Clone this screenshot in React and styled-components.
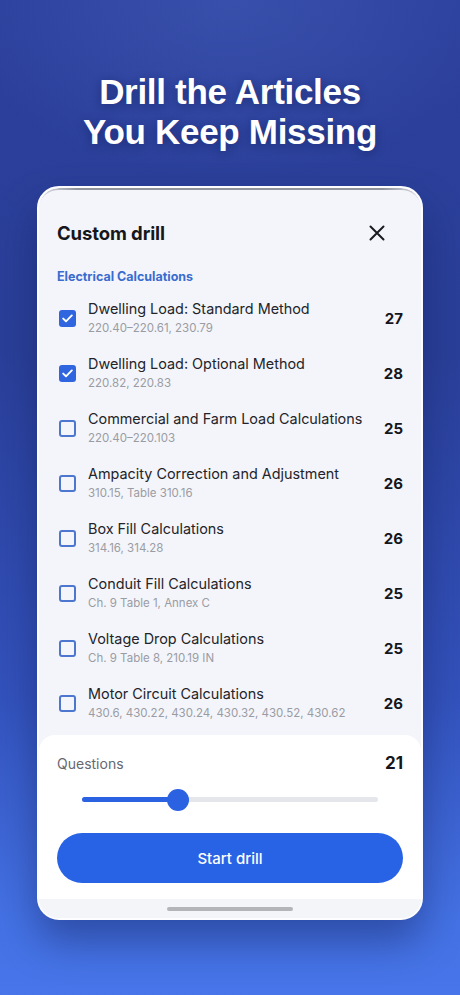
import styled, { createGlobalStyle } from "styled-components";

const GlobalStyle = createGlobalStyle`
  html, body {
    margin: 0;
    padding: 0;
  }
  body {
    font-family: Inter, "Noto Sans", sans-serif;
    -webkit-font-smoothing: antialiased;
  }
`;

const Page = styled.div`
  width: 460px;
  height: 995px;
  overflow: hidden;
  display: flex;
  flex-direction: column;
  align-items: center;
  background:
    radial-gradient(ellipse 60% 18% at 50% 0%, rgba(80, 110, 200, 0.35), rgba(80, 110, 200, 0) 100%),
    linear-gradient(180deg, #2c409c 0%, #2a3f98 35%, #3352bc 70%, #4472e4 92%, #4876ea 100%);
`;

const Headline = styled.h1`
  margin: 72px 0 0;
  font-family: "Liberation Sans", Arial, sans-serif;
  font-weight: 700;
  font-size: 35px;
  line-height: 40px;
  letter-spacing: -0.3px;
  color: #fff;
  text-align: center;
  text-shadow: 0 2px 10px rgba(10, 20, 70, 0.45);
`;

const Card = styled.div`
  margin-top: 34px;
  width: 386px;
  height: 734px;
  box-sizing: border-box;
  background: #f4f5fa;
  border: 2px solid #fdfdff;
  border-radius: 22px;
  box-shadow: 0 22px 40px rgba(18, 30, 90, 0.45);
  overflow: hidden;
  display: flex;
  flex-direction: column;
  position: relative;

  &::before {
    content: "";
    position: absolute;
    left: 0;
    right: 0;
    top: 0;
    height: 30px;
    border-top: 2px solid #8f939c;
    border-radius: 20px 20px 0 0;
    -webkit-mask-image: linear-gradient(90deg, rgba(0,0,0,0.2), #000 10%, #000 90%, rgba(0,0,0,0.2));
    pointer-events: none;
  }
`;

const Header = styled.div`
  display: flex;
  align-items: center;
  justify-content: space-between;
  padding: 30px 36px 0 18px;
  height: 30px;
  flex-shrink: 0;
`;

const Title = styled.div`
  font-size: 18.5px;
  font-weight: 700;
  color: #16171c;
  letter-spacing: -0.1px;
`;

const Close = styled.button`
  border: 0;
  background: none;
  padding: 0;
  display: flex;
  color: #1a1b20;
`;

const Section = styled.div`
  margin: 21px 0 0 18px;
  font-size: 12.5px;
  font-weight: 700;
  color: #3a6ccf;
  flex-shrink: 0;
`;

const List = styled.div`
  display: flex;
  flex-direction: column;
  padding: 7px 18px 0 20px;
  flex-shrink: 0;
`;

const Row = styled.div`
  height: 55px;
  display: flex;
  align-items: center;
  gap: 12px;
`;

const Box = styled.span`
  width: 17px;
  height: 17px;
  box-sizing: border-box;
  border-radius: 3px;
  flex-shrink: 0;
  display: flex;
  align-items: center;
  justify-content: center;
  background: ${(p) => (p.$on ? "#2f66df" : "transparent")};
  border: ${(p) => (p.$on ? "none" : "2px solid #4d76cf")};
`;

const Texts = styled.div`
  flex: 1;
  display: flex;
  flex-direction: column;
  gap: 3px;
  margin-top: -2px;
  white-space: nowrap;
`;

const Name = styled.div`
  font-size: 14.4px;
  color: #23242a;
  line-height: 19px;
`;

const Refs = styled.div`
  font-size: 11.5px;
  color: #9a9ca4;
  line-height: 15px;
`;

const Count = styled.div`
  font-size: 15px;
  font-weight: 700;
  color: #15161b;
`;

const Footer = styled.div`
  margin-top: auto;
  box-sizing: border-box;
  flex-shrink: 0;
  background: #fff;
  border-radius: 16px 16px 0 0;
  padding: 18px 18px 0;
  height: 164px;
  display: flex;
  flex-direction: column;
`;

const QRow = styled.div`
  display: flex;
  justify-content: space-between;
  align-items: center;
  height: 20px;
`;

const QLabel = styled.div`
  font-size: 14px;
  color: #666870;
`;

const QValue = styled.div`
  font-size: 17px;
  font-weight: 700;
  color: #15161b;
`;

const Slider = styled.div`
  margin: 24px 25px 0;
  height: 5px;
  border-radius: 3px;
  background: #e4e6ec;
  position: relative;
`;

const Fill = styled.div`
  height: 100%;
  border-radius: 3px;
  background: #2b62e2;
`;

const Thumb = styled.div`
  position: absolute;
  top: 50%;
  width: 22px;
  height: 22px;
  border-radius: 50%;
  background: #2b62e2;
  transform: translate(-50%, -50%);
`;

const StartButton = styled.button`
  margin-top: 31px;
  height: 50px;
  border: 0;
  border-radius: 25px;
  background: #2863e6;
  color: #fff;
  font-family: Inter, sans-serif;
  font-size: 15px;
  font-weight: 500;
`;

const HomeBar = styled.div`
  height: 19px;
  flex-shrink: 0;
  background: #f4f5f8;
  display: flex;
  align-items: center;
  justify-content: center;
`;

const Indicator = styled.div`
  width: 126px;
  height: 4px;
  border-radius: 2px;
  background: #b4b5b8;
`;

const items = [
  { name: "Dwelling Load: Standard Method", refs: "220.40–220.61, 230.79", n: 27, on: true },
  { name: "Dwelling Load: Optional Method", refs: "220.82, 220.83", n: 28, on: true },
  { name: "Commercial and Farm Load Calculations", refs: "220.40–220.103", n: 25 },
  { name: "Ampacity Correction and Adjustment", refs: "310.15, Table 310.16", n: 26 },
  { name: "Box Fill Calculations", refs: "314.16, 314.28", n: 26 },
  { name: "Conduit Fill Calculations", refs: "Ch. 9 Table 1, Annex C", n: 25 },
  { name: "Voltage Drop Calculations", refs: "Ch. 9 Table 8, 210.19 IN", n: 25 },
  { name: "Motor Circuit Calculations", refs: "430.6, 430.22, 430.24, 430.32, 430.52, 430.62", n: 26 },
];

function Check() {
  return (
    <svg width="11" height="9" viewBox="0 0 11 9" fill="none">
      <path d="M1.2 4.6 L4 7.3 L9.8 1.4" stroke="#fff" strokeWidth="1.9" strokeLinecap="round" strokeLinejoin="round" />
    </svg>
  );
}

export default function App() {
  const pct = 32.4;
  return (
    <>
      <GlobalStyle />
      <Page>
        <Headline>
          Drill the Articles
          <br />
          You Keep Missing
        </Headline>
        <Card>
          <Header>
            <Title>Custom drill</Title>
            <Close aria-label="Close">
              <svg width="16" height="16" viewBox="0 0 16 16">
                <path d="M1.5 1.5 L14.5 14.5 M14.5 1.5 L1.5 14.5" stroke="currentColor" strokeWidth="2" strokeLinecap="round" />
              </svg>
            </Close>
          </Header>
          <Section>Electrical Calculations</Section>
          <List>
            {items.map((it) => (
              <Row key={it.name}>
                <Box $on={it.on}>{it.on && <Check />}</Box>
                <Texts>
                  <Name>{it.name}</Name>
                  <Refs>{it.refs}</Refs>
                </Texts>
                <Count>{it.n}</Count>
              </Row>
            ))}
          </List>
          <Footer>
            <QRow>
              <QLabel>Questions</QLabel>
              <QValue>21</QValue>
            </QRow>
            <Slider>
              <Fill style={{ width: `${pct}%` }} />
              <Thumb style={{ left: `${pct}%` }} />
            </Slider>
            <StartButton>Start drill</StartButton>
          </Footer>
          <HomeBar>
            <Indicator />
          </HomeBar>
        </Card>
      </Page>
    </>
  );
}
